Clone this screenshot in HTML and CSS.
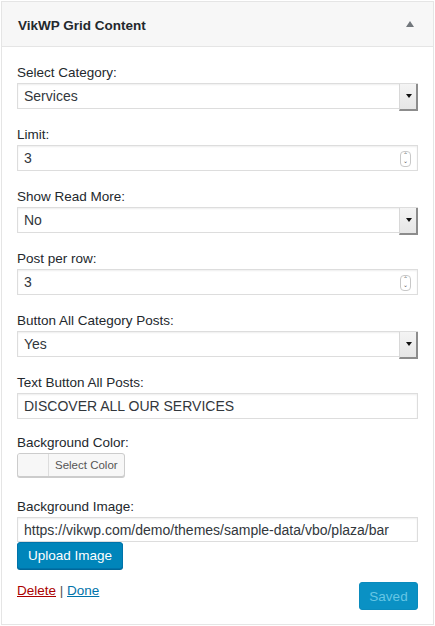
FILE: index.html
```html
<!DOCTYPE html>
<html lang="en">
<head>
    <meta charset="UTF-8">
    <meta name="viewport" content="width=device-width, initial-scale=1.0">
    <title>VikWP Grid Content</title>
    <link rel="stylesheet" href="styles.css">
</head>
<body>
    <div class="widget">
        <div class="widget-top">
            <h3 class="widget-title">VikWP Grid Content</h3>
            <span class="toggle"></span>
        </div>

        <form class="widget-inside">
            <div class="field">
                <label for="cat">Select Category:</label>
                <div class="select-wrap">
                    <select id="cat" class="select">
                        <option>Services</option>
                    </select>
                </div>
            </div>

            <div class="field">
                <label for="limit">Limit:</label>
                <div class="num-wrap">
                    <input id="limit" class="input" type="number" value="3">
                </div>
            </div>

            <div class="field">
                <label for="readmore">Show Read More:</label>
                <div class="select-wrap">
                    <select id="readmore" class="select">
                        <option>No</option>
                    </select>
                </div>
            </div>

            <div class="field">
                <label for="perrow">Post per row:</label>
                <div class="num-wrap">
                    <input id="perrow" class="input" type="number" value="3">
                </div>
            </div>

            <div class="field">
                <label for="allposts">Button All Category Posts:</label>
                <div class="select-wrap">
                    <select id="allposts" class="select">
                        <option>Yes</option>
                    </select>
                </div>
            </div>

            <div class="field field-text">
                <label for="btntext">Text Button All Posts:</label>
                <input id="btntext" class="input" type="text" value="DISCOVER ALL OUR SERVICES">
            </div>

            <div class="field field-color">
                <label>Background Color:</label>
                <button type="button" class="color-btn">
                    <span class="swatch"></span>
                    <span class="color-text">Select Color</span>
                </button>
            </div>

            <div class="field field-image">
                <label for="bgimage">Background Image:</label>
                <input id="bgimage" class="input" type="text" value="https://vikwp.com/demo/themes/sample-data/vbo/plaza/bar">
                <button type="button" class="btn-primary">Upload Image</button>
            </div>

            <div class="controls">
                <div class="links">
                    <a href="#" class="delete">Delete</a> | <a href="#" class="done">Done</a>
                </div>
                <button type="button" class="btn-saved" disabled>Saved</button>
            </div>
        </form>
    </div>
</body>
</html>
```

FILE: styles.css
```css
*{
    padding: 0;
    margin: 0;
    box-sizing: border-box;
}
body{
    background-color: #fff;
    font-family: "Liberation Sans", Arial, sans-serif;
    color: #23282d;
    padding: 1px;
}
.widget{
    border: 1px solid #e5e5e5;
    background: #fff;
    height: 624px;
}
.widget-top{
    height: 45px;
    background: #f7f7f7;
    border-bottom: 1px solid #e5e5e5;
    display: flex;
    align-items: center;
    justify-content: space-between;
    padding: 3px 19px 0 16px;
}
.widget-title{
    font-size: 13.5px;
    font-weight: bold;
    color: #23282d;
}
.toggle{
    width: 0;
    height: 0;
    border-left: 4px solid transparent;
    border-right: 4px solid transparent;
    border-bottom: 6px solid #72777c;
    margin-top: -3px;
}
.widget-inside{
    padding: 17px 15px 0 15px;
}
.field{
    margin-bottom: 17px;
}
.field label{
    display: block;
    font-size: 13.5px;
    line-height: 18px;
    margin-bottom: 1px;
    color: #23282d;
}
.input, .select{
    display: block;
    width: 100%;
    height: 26px;
    border: 1px solid #ddd;
    box-shadow: inset 0 1px 2px rgba(0,0,0,0.07);
    background: #fff;
    font-family: "Liberation Sans", Arial, sans-serif;
    font-size: 14px;
    color: #32373c;
    padding: 0 6px;
    outline: none;
}
.input[type=number]{
    -moz-appearance: textfield;
    appearance: textfield;
}
.input[type=number]::-webkit-inner-spin-button,
.input[type=number]::-webkit-outer-spin-button{
    -webkit-appearance: none;
    margin: 0;
}
.select{
    -webkit-appearance: none;
    appearance: none;
    border-radius: 0;
}
.select-wrap, .num-wrap{
    position: relative;
}
.select-wrap::after{
    content: "";
    position: absolute;
    right: 0;
    top: 1px;
    width: 16px;
    height: 25px;
    background: linear-gradient(#f4f4f4, #e6e6e6);
    border-left: 1px solid #d8d8d8;
    border-right: 2px solid #8c8c8c;
    border-bottom: 2px solid #8c8c8c;
    pointer-events: none;
}
.select-wrap::before{
    content: "";
    position: absolute;
    right: 6px;
    top: 11px;
    width: 0;
    height: 0;
    border-left: 3px solid transparent;
    border-right: 3px solid transparent;
    border-top: 4px solid #111;
    z-index: 1;
    pointer-events: none;
}
.num-wrap::after{
    content: "\2303\A\2304";
    white-space: pre;
    position: absolute;
    right: 7px;
    top: 6px;
    width: 9px;
    height: 14px;
    border: 1px solid #c8c8c8;
    border-radius: 4px;
    font-size: 6px;
    line-height: 6px;
    text-align: center;
    color: #555;
    pointer-events: none;
}
.field-text{
    margin-bottom: 15px;
}
.field-color{
    margin-bottom: 21px;
}
.color-btn{
    display: flex;
    height: 24px;
    border: 1px solid #ccc;
    border-radius: 3px;
    background: #f7f7f7;
    box-shadow: 0 1px 0 #ccc;
    overflow: hidden;
    cursor: pointer;
}
.swatch{
    width: 31px;
    height: 100%;
    border-right: 1px solid #ddd;
    background: #f7f7f7;
}
.color-text{
    font-family: "Liberation Sans", Arial, sans-serif;
    font-size: 11.5px;
    line-height: 22px;
    color: #555;
    padding: 0 6px 0 6px;
}
.field-image{
    margin-bottom: 13px;
}
.field-image .input{
    height: 25px;
}
.btn-primary{
    display: block;
    height: 27px;
    padding: 0 10px;
    background: #0085ba;
    border: 1px solid #0073aa;
    border-radius: 3px;
    box-shadow: 0 1px 0 #006799;
    color: #fff;
    font-family: "Liberation Sans", Arial, sans-serif;
    font-size: 13.5px;
    cursor: pointer;
}
.controls{
    display: flex;
    justify-content: space-between;
    align-items: flex-start;
}
.links{
    font-size: 13.5px;
    line-height: 18px;
    color: #555;
}
.links a{
    text-decoration: underline;
}
.delete{
    color: #a00;
}
.done{
    color: #0073aa;
}
.btn-saved{
    width: 59px;
    height: 28px;
    background: #0a91c4;
    border: 1px solid #0a8bbd;
    border-radius: 3px;
    color: #66c6e4;
    font-family: "Liberation Sans", Arial, sans-serif;
    font-size: 13.5px;
}
```
